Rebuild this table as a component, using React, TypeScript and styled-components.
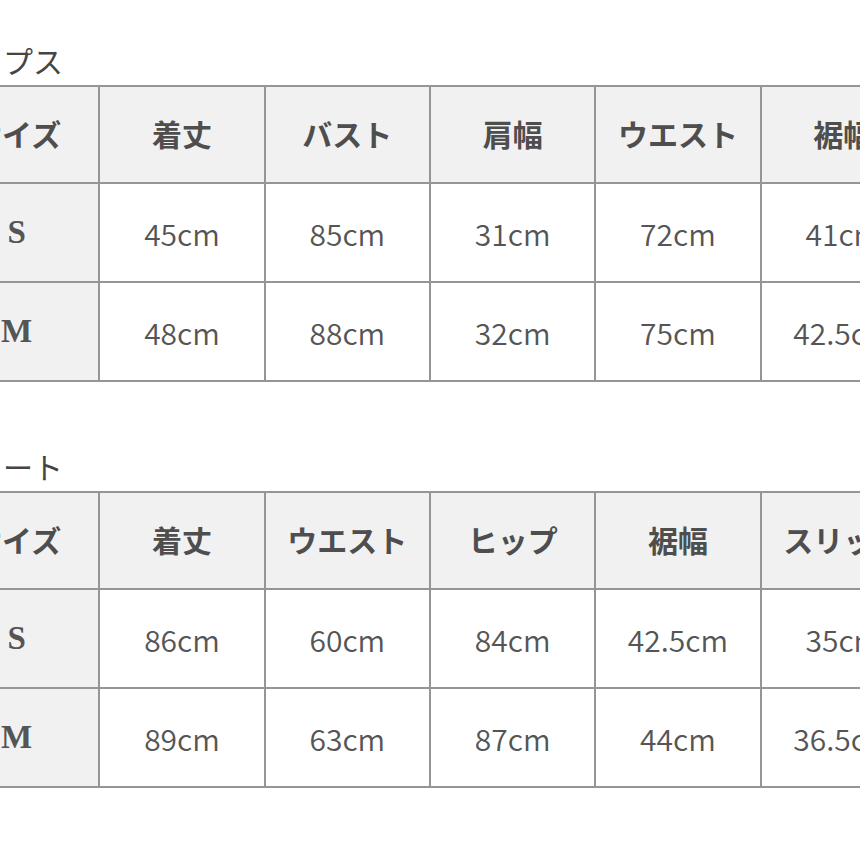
import React from 'react'
import styled, { createGlobalStyle } from 'styled-components'

const GlobalStyle = createGlobalStyle`
    html, body {
        margin: 0;
        padding: 0;
        background: #ffffff;
        overflow: hidden;
    }
`

const Page = styled.div`
    display: flex;
    flex-direction: column;
    width: 1000px;
    margin-left: -67px;
    padding-top: 40px;
    font-family: 'Noto Sans CJK JP', 'Noto Sans', sans-serif;
    color: #555555;
`

const Section = styled.section`
    display: flex;
    flex-direction: column;
    gap: 5px;

    & + & {
        margin-top: 64px;
    }
`

const Title = styled.h2`
    margin: 0 0 0 10px;
    height: 40px;
    line-height: 40px;
    font-size: 30px;
    font-weight: 400;
    color: #454545;
`

const Table = styled.table`
    border-collapse: collapse;
    table-layout: fixed;
    width: 994px;
`

const Cell = styled.td<{ $head?: boolean; $size?: boolean }>`
    height: 97px;
    padding: 0;
    border: 2px solid #959595;
    text-align: center;
    vertical-align: middle;
    background: ${(p) => (p.$head || p.$size ? '#f1f1f1' : '#ffffff')};
    font-size: ${(p) => (p.$head ? '30px' : p.$size ? '33px' : '30px')};
    font-weight: ${(p) => (p.$head || p.$size ? 700 : 350)};
    font-family: ${(p) =>
        p.$size
            ? "'Liberation Serif', serif"
            : "'Noto Sans CJK JP', 'Noto Sans', sans-serif"};
    color: ${(p) => (p.$head ? '#4e4e4e' : '#555555')};
    white-space: nowrap;
    overflow: hidden;
`

const HeadCell = styled(Cell).attrs({ as: 'th' })`
    height: 91px;
    padding-bottom: 4px;
`

type SizeTable = {
    title: string
    headers: string[]
    rows: string[][]
}

const tables: SizeTable[] = [
    {
        title: 'トップス',
        headers: ['サイズ', '着丈', 'バスト', '肩幅', 'ウエスト', '裾幅'],
        rows: [
            ['S', '45cm', '85cm', '31cm', '72cm', '41cm'],
            ['M', '48cm', '88cm', '32cm', '75cm', '42.5cm'],
        ],
    },
    {
        title: 'スカート',
        headers: ['サイズ', '着丈', 'ウエスト', 'ヒップ', '裾幅', 'スリット'],
        rows: [
            ['S', '86cm', '60cm', '84cm', '42.5cm', '35cm'],
            ['M', '89cm', '63cm', '87cm', '44cm', '36.5cm'],
        ],
    },
]

const App: React.FC = () => {
    return (
        <>
            <GlobalStyle />
            <Page>
                {tables.map((t) => (
                    <Section key={t.title}>
                        <Title>{t.title}</Title>
                        <Table>
                            <tbody>
                                <tr>
                                    {t.headers.map((h) => (
                                        <HeadCell key={h} $head>
                                            {h}
                                        </HeadCell>
                                    ))}
                                </tr>
                                {t.rows.map((r) => (
                                    <tr key={r[0]}>
                                        {r.map((v, i) => (
                                            <Cell key={i} $size={i === 0}>
                                                {v}
                                            </Cell>
                                        ))}
                                    </tr>
                                ))}
                            </tbody>
                        </Table>
                    </Section>
                ))}
            </Page>
        </>
    )
}

export default App
